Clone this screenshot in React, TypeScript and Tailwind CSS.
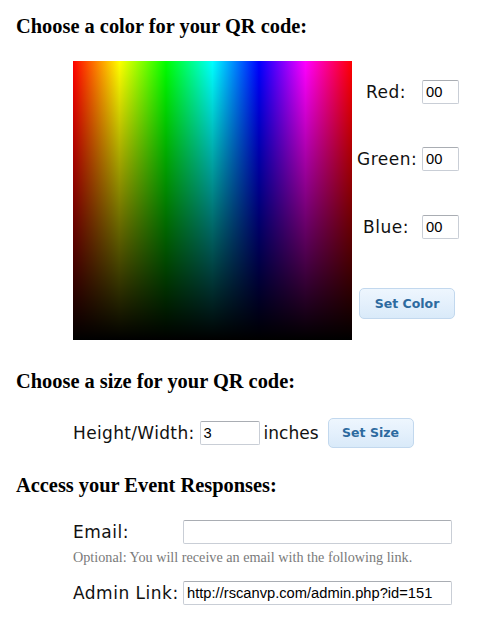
import React from "react";

const sans = "font-['DejaVu_Sans','Verdana',sans-serif]";
const serif = "font-['Liberation_Serif','Times_New_Roman',serif]";
const arial = "font-['Liberation_Sans','Arial',sans-serif]";

function Field({ value, w, h = "h-[24px]" }: { value: string; w: string; h?: string }) {
  return (
    <div
      className={`${w} ${h} border border-[#c9ced6] border-t-[#a9adb3] bg-white rounded-[2px] flex items-center pl-[3px] text-[14.7px] leading-[18px] text-black ${arial} overflow-hidden whitespace-nowrap`}
    >
      {value}
    </div>
  );
}

function Btn({ label, w, h }: { label: string; w: string; h: string }) {
  return (
    <div
      className={`${w} ${h} flex items-center justify-center rounded-[5px] border border-[#c2d8ee] bg-[linear-gradient(to_bottom,#eef6fe,#e4f0fc_50%,#d9eaf9)] text-[12.5px] leading-[16px] font-bold text-[#2d6a9f] ${sans}`}
    >
      {label}
    </div>
  );
}

export default function App() {
  return (
    <div className="bg-white w-[481px] h-[620px] pl-[16px] text-black">
      <div className={`pt-[15px] h-[37px] leading-[22px] text-[20.4px] font-bold ${serif}`}>
        Choose a color for your QR code:
      </div>

      <div className="flex mt-[24px] ml-[57px]">
        <div className="w-[279px] h-[279px] bg-[linear-gradient(to_right,#f00,#ff0,#0f0,#0ff,#00f,#f0f,#f00)]">
          <div className="w-full h-full bg-[linear-gradient(to_bottom,rgba(0,0,0,0),#000)]" />
        </div>
        <div className={`ml-[5px] flex flex-col ${sans} text-[17px] leading-[20px] text-[#111]`}>
          <div className="flex items-center mt-[19px] h-[24px]">
            <div className="w-[58px] text-center tracking-[0.5px]">Red:</div>
            <div className="ml-[7px]"><Field value="00" w="w-[37px]" /></div>
          </div>
          <div className="flex items-center mt-[43px] h-[24px]">
            <div className="w-[58px] text-center tracking-[0.5px]">Green:</div>
            <div className="ml-[7px]"><Field value="00" w="w-[37px]" /></div>
          </div>
          <div className="flex items-center mt-[44px] h-[24px]">
            <div className="w-[58px] text-center tracking-[0.5px]">Blue:</div>
            <div className="ml-[7px]"><Field value="00" w="w-[37px]" /></div>
          </div>
          <div className="mt-[49px] ml-[2px]">
            <Btn label="Set Color" w="w-[96px]" h="h-[31px]" />
          </div>
        </div>
      </div>

      <div className={`mt-[30px] h-[22px] leading-[22px] text-[20.4px] font-bold ${serif}`}>
        Choose a size for your QR code:
      </div>

      <div className={`flex items-center mt-[26px] ml-[57px] h-[30px] ${sans} text-[17px] leading-[20px] text-[#111]`}>
        <div className="tracking-[0.35px]">Height/Width:</div>
        <div className="ml-[5px]"><Field value="3" w="w-[60px]" /></div>
        <div className="ml-[4px]">inches</div>
        <div className="ml-[9px]"><Btn label="Set Size" w="w-[86px]" h="h-[30px]" /></div>
      </div>

      <div className={`mt-[26px] h-[22px] leading-[22px] text-[20.4px] font-bold ${serif}`}>
        Access your Event Responses:
      </div>

      <div className={`ml-[57px] ${sans} text-[17px] leading-[20px] text-[#111]`}>
        <div className="flex items-center mt-[24px] h-[24px]">
          <div className="w-[110px] tracking-[0.5px]">Email:</div>
          <Field value="" w="w-[269px]" />
        </div>
        <div className={`mt-[5px] h-[16px] leading-[16px] text-[14.2px] text-[#7a7a7a] ${serif}`}>
          Optional: You will receive an email with the following link.
        </div>
        <div className="flex items-center mt-[16px] h-[24px]">
          <div className="w-[110px] tracking-[0.5px]">Admin Link:</div>
          <Field value="http://rscanvp.com/admin.php?id=151" w="w-[269px]" />
        </div>
      </div>
    </div>
  );
}
